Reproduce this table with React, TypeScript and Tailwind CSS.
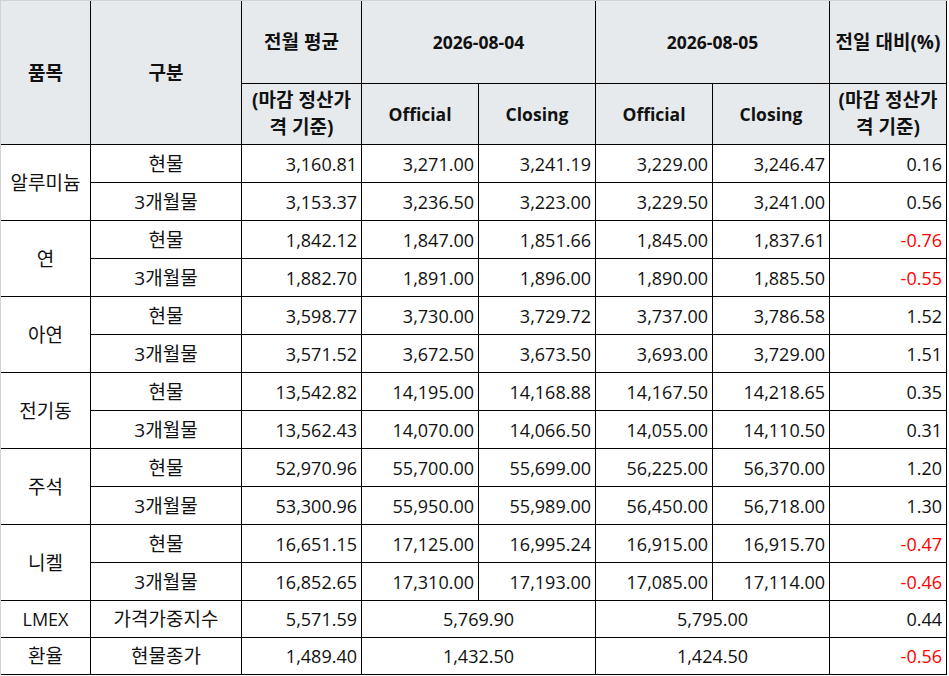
import React from "react";

type Row = { item?: string; span?: number; kind: string; vals: string[]; diff: string };

const rows: Row[] = [
  { item: "알루미늄", span: 2, kind: "현물", vals: ["3,160.81", "3,271.00", "3,241.19", "3,229.00", "3,246.47"], diff: "0.16" },
  { kind: "3개월물", vals: ["3,153.37", "3,236.50", "3,223.00", "3,229.50", "3,241.00"], diff: "0.56" },
  { item: "연", span: 2, kind: "현물", vals: ["1,842.12", "1,847.00", "1,851.66", "1,845.00", "1,837.61"], diff: "-0.76" },
  { kind: "3개월물", vals: ["1,882.70", "1,891.00", "1,896.00", "1,890.00", "1,885.50"], diff: "-0.55" },
  { item: "아연", span: 2, kind: "현물", vals: ["3,598.77", "3,730.00", "3,729.72", "3,737.00", "3,786.58"], diff: "1.52" },
  { kind: "3개월물", vals: ["3,571.52", "3,672.50", "3,673.50", "3,693.00", "3,729.00"], diff: "1.51" },
  { item: "전기동", span: 2, kind: "현물", vals: ["13,542.82", "14,195.00", "14,168.88", "14,167.50", "14,218.65"], diff: "0.35" },
  { kind: "3개월물", vals: ["13,562.43", "14,070.00", "14,066.50", "14,055.00", "14,110.50"], diff: "0.31" },
  { item: "주석", span: 2, kind: "현물", vals: ["52,970.96", "55,700.00", "55,699.00", "56,225.00", "56,370.00"], diff: "1.20" },
  { kind: "3개월물", vals: ["53,300.96", "55,950.00", "55,989.00", "56,450.00", "56,718.00"], diff: "1.30" },
  { item: "니켈", span: 2, kind: "현물", vals: ["16,651.15", "17,125.00", "16,995.24", "16,915.00", "16,915.70"], diff: "-0.47" },
  { kind: "3개월물", vals: ["16,852.65", "17,310.00", "17,193.00", "17,085.00", "17,114.00"], diff: "-0.46" },
];

const merged = [
  { item: "LMEX", kind: "가격가중지수", avg: "5,571.59", d1: "5,769.90", d2: "5,795.00", diff: "0.44" },
  { item: "환율", kind: "현물종가", avg: "1,489.40", d1: "1,432.50", d2: "1,424.50", diff: "-0.56" },
];

const cell = "border-r border-b border-black p-0";
const head = `${cell} bg-[#e7eaed] font-bold text-[17.5px] text-center align-middle`;
// korean labels come out a bit small next to the digits, bump them
const headKo = `${cell} bg-[#e7eaed] font-bold text-[19px] text-center align-middle`;
const label = `${cell} text-center align-middle`;
const labelKo = `${label} text-[19px]`;
const num = `${cell} text-right pr-[4px] align-middle`;

const diffColor = (d: string) => (d.startsWith("-") ? "text-[#ff0000]" : "text-[#111]");

export default function App() {
  return (
    <div className="w-[949px] h-[676px] bg-white text-[18px] leading-[24px] text-[#111]" style={{ fontFamily: '"Open Sans", "Noto Sans CJK KR", sans-serif' }}>
      <div className="inline-block border-l border-t border-[#cfd2d6]">
        <table className="table-fixed border-separate border-spacing-0 w-[946px]">
          <colgroup>
            <col className="w-[90px]" />
            <col className="w-[151px]" />
            <col className="w-[120px]" />
            <col className="w-[117px]" />
            <col className="w-[117px]" />
            <col className="w-[117px]" />
            <col className="w-[117px]" />
            <col className="w-[117px]" />
          </colgroup>
          <thead>
            <tr className="h-[83px]">
              <th rowSpan={2} className={headKo}>품목</th>
              <th rowSpan={2} className={headKo}>구분</th>
              <th className={headKo}>전월 평균</th>
              <th colSpan={2} className={head}>2026-08-04</th>
              <th colSpan={2} className={head}>2026-08-05</th>
              <th className={`${headKo} whitespace-nowrap`}>전일 대비(%)</th>
            </tr>
            <tr className="h-[61px]">
              <th className={`${headKo} leading-[27px] whitespace-nowrap`}>(마감 정산가<br />격 기준)</th>
              <th className={head}>Official</th>
              <th className={head}>Closing</th>
              <th className={head}>Official</th>
              <th className={head}>Closing</th>
              <th className={`${headKo} leading-[27px] whitespace-nowrap`}>(마감 정산가<br />격 기준)</th>
            </tr>
          </thead>
          <tbody>
            {rows.map((r, i) => (
              <tr key={i} className="h-[38px]">
                {r.item && (
                  <td rowSpan={r.span} className={labelKo}>{r.item}</td>
                )}
                <td className={labelKo}>{r.kind}</td>
                {r.vals.map((v, j) => (
                  <td key={j} className={num}>{v}</td>
                ))}
                <td className={`${num} pr-[3px] ${diffColor(r.diff)}`}>{r.diff}</td>
              </tr>
            ))}
            {merged.map((m) => (
              <tr key={m.item} className="h-[37px]">
                <td className={m.item === "LMEX" ? label : labelKo}>{m.item}</td>
                <td className={labelKo}>{m.kind}</td>
                <td className={num}>{m.avg}</td>
                <td colSpan={2} className={label}>{m.d1}</td>
                <td colSpan={2} className={label}>{m.d2}</td>
                <td className={`${num} pr-[3px] ${diffColor(m.diff)}`}>{m.diff}</td>
              </tr>
            ))}
          </tbody>
        </table>
      </div>
    </div>
  );
}
